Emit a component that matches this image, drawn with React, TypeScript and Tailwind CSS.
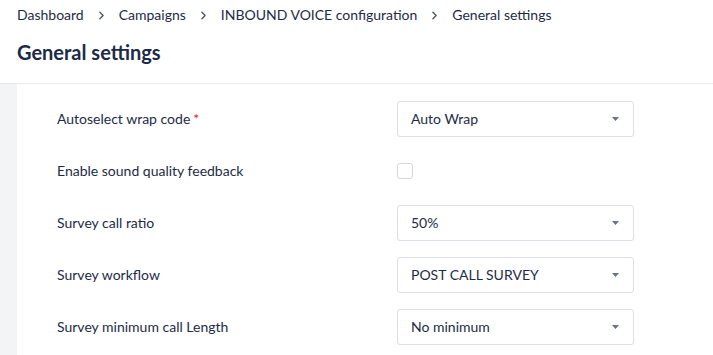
import { ChevronRight } from 'lucide-react'

const crumbs = ['Dashboard', 'Campaigns', 'INBOUND VOICE configuration', 'General settings']

type Row = { label: string; required?: boolean; value?: string; checkbox?: boolean }

const rows: Row[] = [
  { label: 'Autoselect wrap code', required: true, value: 'Auto Wrap' },
  { label: 'Enable sound quality feedback', checkbox: true },
  { label: 'Survey call ratio', value: '50%' },
  { label: 'Survey workflow', value: 'POST CALL SURVEY' },
  { label: 'Survey minimum call Length', value: 'No minimum' },
]

function Select({ value }: { value: string }) {
  return (
    <div className="w-[237px] h-[36px] border border-[#dcdfe4] rounded-[3px] bg-white flex items-center pl-[13px] pr-[14px]">
      <span className="flex-1 text-sm text-[#1e2b46]">{value}</span>
      <svg width="7" height="4" viewBox="0 0 7 4">
        <path d="M0 0h7L3.5 4z" fill="#6b7280" />
      </svg>
    </div>
  )
}

export default function App() {
  return (
    <div className="w-[713px] h-[355px] bg-white overflow-hidden font-['Lato',sans-serif] text-[#1e2b46]">
      {/* header */}
      <div className="h-[84px] border-b border-[#e8eaed] px-[17px] pt-[5px]">
        <div className="flex items-center h-5 text-sm leading-5">
          {crumbs.map((c, i) => (
            <div key={c} className="flex items-center">
              {i > 0 && <ChevronRight size={13} strokeWidth={2.5} className="mx-[11px] text-[#4b5563]" />}
              <span>{c}</span>
            </div>
          ))}
        </div>
        <h1 className="mt-[13px] text-xl leading-7 font-bold text-[#1b2a47]">General settings</h1>
      </div>

      {/* body */}
      <div className="flex h-full">
        <div className="w-[17px] bg-[#f3f4f6]" />
        <div className="flex-1 pt-[17px] pl-[40px] flex flex-col gap-[16px]">
          {rows.map(r => (
            <div key={r.label} className="flex items-center h-[36px]">
              <div className="w-[340px] text-sm">
                {r.label}
                {r.required && <span className="text-[#e02424] ml-[3px]">*</span>}
              </div>
              {r.checkbox ? (
                <div className="w-4 h-4 border border-[#d5d8dd] rounded-[3px] bg-white" />
              ) : (
                <Select value={r.value!} />
              )}
            </div>
          ))}
        </div>
      </div>
    </div>
  )
}
